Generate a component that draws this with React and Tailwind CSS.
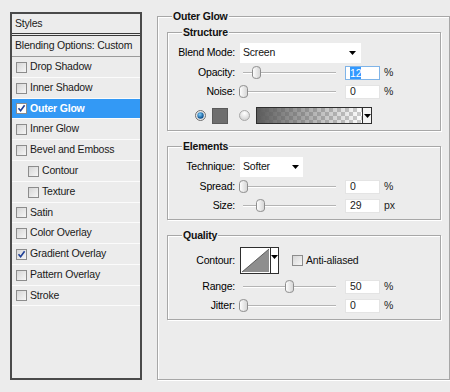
import React from "react";

const FONT = { fontFamily: '"Liberation Sans", Arial, sans-serif' };

function Check({ checked, white }) {
  return (
    <span
      className={
        "w-[11px] h-[11px] shrink-0 border border-[#8c8c8c] flex items-center justify-center " +
        (white ? "bg-white" : "bg-gradient-to-br from-[#d6d6d6] to-[#f6f6f6]")
      }
    >
      {checked && (
        <svg width="9" height="9" viewBox="0 0 9 9">
          <path d="M1.5 4.3 L3.6 6.8 L7.6 1.2" fill="none" stroke="#1f3f96" strokeWidth="1.6" />
        </svg>
      )}
    </span>
  );
}

function StyleRow({ label, checked, indent, selected, short }) {
  return (
    <div
      className={
        (short ? "h-[20px] " : "h-[21px] ") +
        "shrink-0 flex items-center border-b border-[#fbfbfb] " +
        (indent ? "pl-[16px] " : "pl-[4px] ") +
        (selected ? "bg-[#3399f5] text-white font-bold" : "text-[#1a1a1a]")
      }
    >
      <Check checked={checked} white={selected} />
      <span className="ml-[3px]">{label}</span>
    </div>
  );
}

function Arrow() {
  return (
    <svg width="7" height="4" viewBox="0 0 7 4">
      <polygon points="0,0 7,0 3.5,4" fill="#000" />
    </svg>
  );
}

function Thumb() {
  return (
    <svg width="9" height="13" viewBox="0 0 9 13">
      <defs>
        <linearGradient id="tg" x1="0" x2="1">
          <stop offset="0" stopColor="#ffffff" />
          <stop offset="1" stopColor="#d4d4d4" />
        </linearGradient>
      </defs>
      <path d="M0.5 3.5 Q0.5 0.5 4.5 0.5 Q8.5 0.5 8.5 3.5 V10 Q8.5 12.5 4.5 12.5 Q0.5 12.5 0.5 10 Z" fill="url(#tg)" stroke="#8e8e8e" />
    </svg>
  );
}

function Slider({ pos }) {
  return (
    <div className="relative w-[100px] h-[14px] shrink-0">
      <div className="ml-[3px] mt-[6px] w-[93px] h-[1px] bg-[#b4b4b4] shadow-[0_1px_0_#ffffff]" />
      <div className="absolute top-[0px]" style={{ left: pos }}>
        <Thumb />
      </div>
    </div>
  );
}

function Label({ children }) {
  return <div className="w-[67px] shrink-0 text-right mr-[5px]">{children}</div>;
}

function NumRow({ label, pos, value, unit, focused, className }) {
  return (
    <div className={"flex items-center h-[14px] " + (className || "")}>
      <Label>{label}</Label>
      <Slider pos={pos} />
      <div
        className={
          "ml-[5px] w-[35px] h-[14px] bg-white flex items-center pl-[4px] text-[#222] border " +
          (focused ? "border-[#7fb4e8]" : "border-[#e4e4e4]")
        }
      >
        {focused ? <span className="bg-[#3399ff] text-white leading-[12px]">{value}</span> : value}
      </div>
      <span className="ml-[4px] text-[#222]">{unit}</span>
    </div>
  );
}

function Group({ title, children, className }) {
  return (
    <fieldset
      className={
        "w-[274px] border border-[#a7a7a7] shadow-[inset_1px_1px_0_#ffffff,1px_1px_0_#ffffff] px-0 pb-[6px] " +
        (className || "")
      }
    >
      <legend className="ml-[14px] px-[1px] font-bold leading-[13px] bg-[#ececec] text-[#111]">{title}</legend>
      {children}
    </fieldset>
  );
}

function GradientBox() {
  return (
    <div className="flex h-[17px] border border-[#2e2e2e] shrink-0">
      <svg width="105" height="15" viewBox="0 0 105 15">
        <defs>
          <pattern id="chk" width="8" height="8" patternUnits="userSpaceOnUse">
            <rect width="8" height="8" fill="#ffffff" />
            <rect width="4" height="4" fill="#cccccc" />
            <rect x="4" y="4" width="4" height="4" fill="#cccccc" />
          </pattern>
          <linearGradient id="gg" x1="0" x2="1">
            <stop offset="0" stopColor="#5c5c5c" stopOpacity="1" />
            <stop offset="1" stopColor="#5c5c5c" stopOpacity="0" />
          </linearGradient>
        </defs>
        <rect width="105" height="15" fill="url(#chk)" />
        <rect width="105" height="15" fill="url(#gg)" />
      </svg>
      <div className="w-[9px] border-l border-[#2e2e2e] bg-[#f4f4f4] flex items-center justify-center">
        <Arrow />
      </div>
    </div>
  );
}

function ContourBox() {
  return (
    <div className="flex h-[27px] border border-[#2e2e2e] shrink-0">
      <svg width="29" height="25" viewBox="0 0 29 25">
        <rect width="29" height="25" fill="#ffffff" />
        <polygon points="1,24 28,1 28,24" fill="#8e8e8e" />
        <line x1="1" y1="24" x2="28" y2="1" stroke="#444" strokeWidth="0.8" />
      </svg>
      <div className="w-[8px] border-l border-[#2e2e2e] bg-white flex justify-center pt-[7px]">
        <Arrow />
      </div>
    </div>
  );
}

function Radio({ on }) {
  return on ? (
    <svg width="11" height="11" viewBox="0 0 11 11">
      <defs>
        <radialGradient id="rb" cx="0.4" cy="0.35" r="0.6">
          <stop offset="0" stopColor="#7fd0ff" />
          <stop offset="1" stopColor="#0a4f8e" />
        </radialGradient>
      </defs>
      <circle cx="5.5" cy="5.5" r="5" fill="#e8e8e8" stroke="#6e6e6e" />
      <circle cx="5.5" cy="5.5" r="3.2" fill="url(#rb)" />
    </svg>
  ) : (
    <svg width="11" height="11" viewBox="0 0 11 11">
      <defs>
        <radialGradient id="rg" cx="0.5" cy="0.3" r="0.7">
          <stop offset="0" stopColor="#ffffff" />
          <stop offset="1" stopColor="#cfcfcf" />
        </radialGradient>
      </defs>
      <circle cx="5.5" cy="5.5" r="5" fill="url(#rg)" stroke="#a8a8a8" />
    </svg>
  );
}

export default function App() {
  return (
    <div
      className="w-[450px] h-[392px] bg-[#ececec] flex text-[10.5px] tracking-[-0.2px] overflow-hidden"
      style={FONT}
    >
      {/* Left styles list */}
      <div className="ml-[10px] mt-[12px] w-[132px] h-[368px] border-2 border-[#4a4a4a] flex flex-col shrink-0">
        <div className="h-[22px] shrink-0 flex items-center pl-[3px] border-b-[3px] border-double border-[#3a3a3a] text-[#1a1a1a]">
          Styles
        </div>
        <div className="h-[21px] shrink-0 flex items-center pl-[3px] border-b border-[#9a9a9a] text-[#1a1a1a] whitespace-nowrap">
          Blending Options: Custom
        </div>
        <StyleRow label="Drop Shadow" />
        <StyleRow label="Inner Shadow" />
        <StyleRow label="Outer Glow" checked selected short />
        <StyleRow label="Inner Glow" />
        <StyleRow label="Bevel and Emboss" />
        <StyleRow label="Contour" indent />
        <StyleRow label="Texture" indent />
        <StyleRow label="Satin" short />
        <StyleRow label="Color Overlay" />
        <StyleRow label="Gradient Overlay" checked />
        <StyleRow label="Pattern Overlay" />
        <StyleRow label="Stroke" short />
      </div>

      {/* Right panel */}
      <fieldset className="ml-[15px] mt-[10px] w-[293px] h-[370px] shrink-0 border border-[#a7a7a7] shadow-[inset_1px_1px_0_#ffffff,1px_1px_0_#ffffff] pl-[9px] pr-0 pt-[3px]">
        <legend className="ml-[5px] px-[1px] font-bold leading-[13px] bg-[#ececec] text-[#111]">Outer Glow</legend>

        <Group title="Structure">
          <div className="flex items-center h-[20px] mt-[4px]">
            <Label>Blend Mode:</Label>
            <div className="w-[121px] h-[20px] bg-white flex items-center justify-between pl-[3px] pr-[5px] text-[#111]">
              <span>Screen</span>
              <Arrow />
            </div>
          </div>
          <NumRow label="Opacity:" pos={12} value="12" unit="%" focused className="mt-[3px]" />
          <NumRow label="Noise:" pos={-1} value="0" unit="%" className="mt-[5px]" />
          <div className="flex items-center h-[17px] mt-[8px]">
            <div className="ml-[27px]">
              <Radio on />
            </div>
            <div className="ml-[6px] w-[16px] h-[16px] bg-[#6e6e6e] border border-[#5a5a5a]" />
            <div className="ml-[11px]">
              <Radio />
            </div>
            <div className="ml-[6px]">
              <GradientBox />
            </div>
          </div>
        </Group>

        <Group title="Elements" className="mt-[9px]">
          <div className="flex items-center h-[20px] mt-[4px]">
            <Label>Technique:</Label>
            <div className="w-[63px] h-[20px] bg-white flex items-center justify-between pl-[3px] pr-[4px] text-[#111]">
              <span>Softer</span>
              <Arrow />
            </div>
          </div>
          <NumRow label="Spread:" pos={-1} value="0" unit="%" className="mt-[3px]" />
          <NumRow label="Size:" pos={16} value="29" unit="px" className="mt-[5px]" />
        </Group>

        <Group title="Quality" className="mt-[9px]">
          <div className="flex items-center h-[27px] mt-[5px]">
            <Label>Contour:</Label>
            <ContourBox />
            <div className="ml-[13px] flex items-center">
              <Check />
              <span className="ml-[3px] text-[#111]">Anti-aliased</span>
            </div>
          </div>
          <NumRow label="Range:" pos={45} value="50" unit="%" className="mt-[6px]" />
          <NumRow label="Jitter:" pos={-1} value="0" unit="%" className="mt-[5px]" />
        </Group>
      </fieldset>
    </div>
  );
}
